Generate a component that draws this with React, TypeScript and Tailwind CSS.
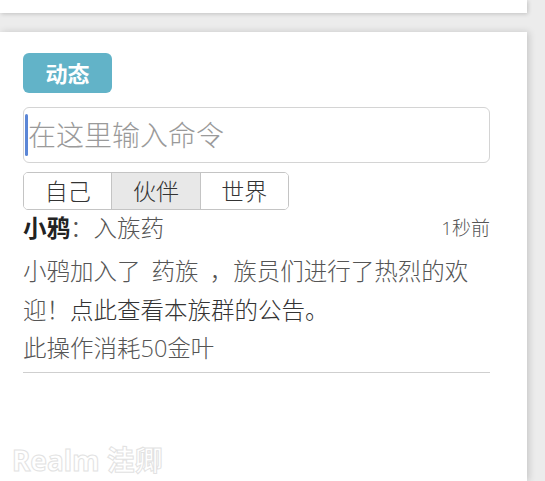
import React from 'react';

const tabs = ['自己', '伙伴', '世界'];

const App: React.FC = () => {
    const active = '伙伴';

    return (
        <div className="relative w-[545px] h-[481px] overflow-hidden bg-[#ececec] font-['Open_Sans','Noto_Sans_CJK_SC',sans-serif]">
            {/* previous card peeking in */}
            <div className="w-[527px] h-[13px] bg-white shadow-[1px_1px_4px_rgba(0,0,0,0.18)]" />

            {/* activity card */}
            <div className="mt-[19px] w-[527px] h-[449px] bg-white px-[23px] pt-[21px] shadow-[2px_0_7px_rgba(0,0,0,0.16)]">
                <div className="w-[89px] h-[40px] rounded-[6px] bg-[#62b3c8] flex items-center justify-center text-white text-[22px] font-bold">
                    动态
                </div>

                <div className="mt-[14px] w-[467px] h-[56px] rounded-[6px] border-[1.5px] border-[#d4d4d4] flex items-center pl-[1px]">
                    <span className="w-[3px] h-[42px] bg-[#5b86d6] rounded-sm" />
                    <span className="text-[28px] font-light text-[#9a9a9a] leading-none">在这里输入命令</span>
                </div>

                <div className="mt-[9px] w-[266px] h-[38px] flex rounded-[5px] border-[1.5px] border-[#c4c4c4] overflow-hidden">
                    {tabs.map((t, i) => (
                        <div
                            key={t}
                            className={`flex-1 flex items-center justify-center text-[23px] font-light text-[#333] ${i > 0 ? 'border-l-[1.5px] border-[#c4c4c4]' : ''} ${t === active ? 'bg-[#e8e8e8]' : 'bg-white'}`}
                        >
                            {t}
                        </div>
                    ))}
                </div>

                <div className="w-[467px] flex items-center justify-between leading-[36px]">
                    <div className="text-[23.5px] font-light text-[#555]">
                        <span className="font-bold text-[#222]">小鸦</span>
                        <span>：</span>
                        <span>入族药</span>
                    </div>
                    <span className="text-[19px] font-light text-[#555]">1秒前</span>
                </div>

                <div className="mt-[6px] w-[467px] pb-[4px] border-b-[1.5px] border-[#cfcfcf] text-[23.5px] font-light leading-[38.5px] text-[#555] [word-spacing:5px]">
                    <p className="whitespace-nowrap">小鸦加入了 药族 ，族员们进行了热烈的欢</p>
                    <p className="whitespace-nowrap">迎！<span className="text-[#333]">点此查看本族群的公告。</span></p>
                    <p>此操作消耗50金叶</p>
                </div>
            </div>

            {/* watermark */}
            <div className="absolute left-[12px] top-[439px] text-[28px] font-bold text-white [-webkit-text-stroke:1px_#e2e2e2] font-['Noto_Sans','Noto_Sans_CJK_SC',sans-serif]">
                Realm 洼卿
            </div>
        </div>
    );
};

export default App;
